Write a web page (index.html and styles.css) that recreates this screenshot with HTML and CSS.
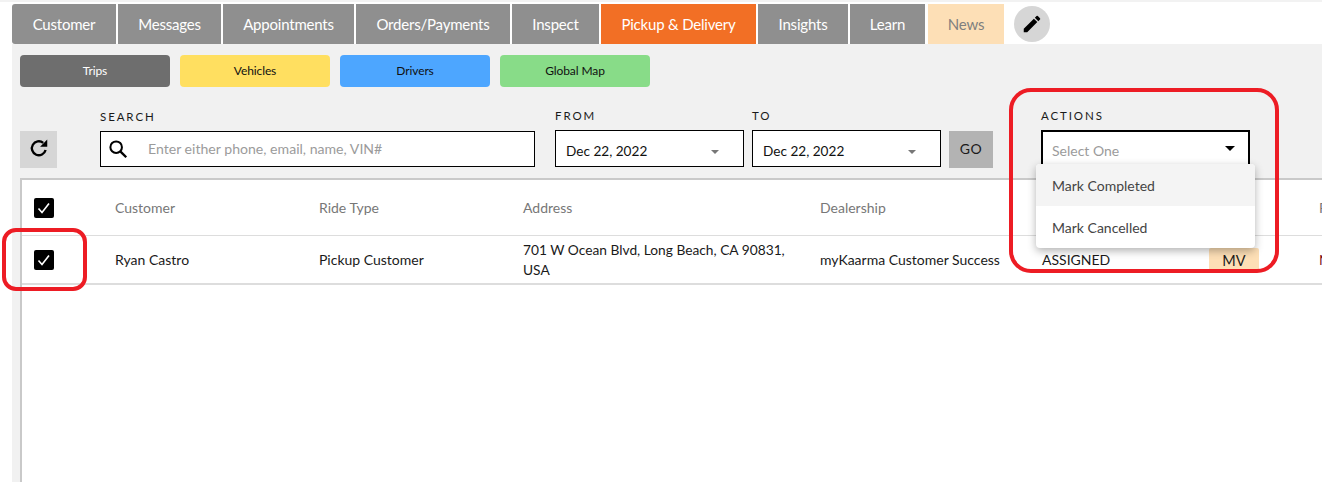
FILE: index.html
```html
<!DOCTYPE html>
<html lang="en">
<head>
<meta charset="utf-8">
<title>Pickup &amp; Delivery</title>
<link rel="stylesheet" href="styles.css">
</head>
<body>
<div class="page">
  <nav class="tabs">
    <a class="tab w-customer first">Customer</a>
    <a class="tab w-messages">Messages</a>
    <a class="tab w-appts">Appointments</a>
    <a class="tab w-orders">Orders/Payments</a>
    <a class="tab w-inspect">Inspect</a>
    <a class="tab w-pickup active">Pickup &amp; Delivery</a>
    <a class="tab w-insights">Insights</a>
    <a class="tab w-learn">Learn</a>
    <a class="tab w-news news">News</a>
    <span class="edit">
      <svg width="22" height="22" viewBox="0 0 24 24"><path d="M3 17.25V21h3.75L17.81 9.94l-3.75-3.75L3 17.25zM20.71 7.04a1 1 0 0 0 0-1.41l-2.34-2.34a1 1 0 0 0-1.41 0l-1.83 1.83 3.75 3.75 1.83-1.83z" fill="#000"/></svg>
    </span>
  </nav>
  <main class="panel">
    <div class="subnav">
      <a class="pill trips">Trips</a>
      <a class="pill vehicles">Vehicles</a>
      <a class="pill drivers">Drivers</a>
      <a class="pill map">Global Map</a>
    </div>
    <div class="filters">
      <button class="refresh">
        <svg width="22" height="22" viewBox="0 0 24 24"><path d="M19.2 14.2A7.6 7.6 0 1 1 16.6 6.4" fill="none" stroke="#000" stroke-width="2.6"/><path d="M13.2 10.6H21V2.8z" fill="#000"/></svg>
      </button>
      <div class="field search-field">
        <label class="label">SEARCH</label>
        <div class="box search">
          <svg width="22" height="22" viewBox="0 0 24 24"><circle cx="10" cy="10" r="6.3" fill="none" stroke="#000" stroke-width="2.2"/><path d="M14.8 14.8 21 21" stroke="#000" stroke-width="2.6" fill="none"/></svg>
          <span class="placeholder">Enter either phone, email, name, VIN#</span>
        </div>
      </div>
      <div class="field date-from">
        <label class="label">FROM</label>
        <div class="box date"><span>Dec 22, 2022</span><i class="caret grey"></i></div>
      </div>
      <div class="field date-to">
        <label class="label">TO</label>
        <div class="box date"><span>Dec 22, 2022</span><i class="caret grey"></i></div>
      </div>
      <button class="go">GO</button>
      <div class="field actions">
        <label class="label">ACTIONS</label>
        <div class="box select"><span class="placeholder">Select One</span><i class="caret"></i></div>
        <ul class="menu">
          <li class="hover">Mark Completed</li>
          <li>Mark Cancelled</li>
        </ul>
      </div>
    </div>
    <section class="table">
      <div class="row head">
        <span class="cb"><svg width="20" height="20" viewBox="0 0 20 20"><path d="M4.5 10.5 8 14.5 15 5.5" fill="none" stroke="#fff" stroke-width="1.6"/></svg></span>
        <span>Customer</span>
        <span>Ride Type</span>
        <span>Address</span>
        <span>Dealership</span>
        <span></span>
        <span></span>
        <span>Pickup</span>
      </div>
      <div class="row body">
        <span class="cb"><svg width="20" height="20" viewBox="0 0 20 20"><path d="M4.5 10.5 8 14.5 15 5.5" fill="none" stroke="#fff" stroke-width="1.6"/></svg></span>
        <span>Ryan Castro</span>
        <span>Pickup Customer</span>
        <span class="address">701 W Ocean Blvd, Long Beach, CA 90831, USA</span>
        <span>myKaarma Customer Success</span>
        <span class="status">ASSIGNED</span>
        <span class="badge">MV</span>
        <span class="extra">N/A</span>
      </div>
    </section>
  </main>
  <div class="mark mark-actions"></div>
  <div class="mark mark-check"></div>
</div>
</body>
</html>
```
FILE: styles.css
```css
* { box-sizing: border-box; }
html, body { margin: 0; padding: 0; height: 100%; overflow: hidden; background: #fff; }
body { font-family: Lato, "Liberation Sans", sans-serif; color: #1a1a1a; }
.page { position: relative; width: 1322px; height: 482px; overflow: hidden; padding: 2px 0 0 12px; border-top: 2px solid #f2f2f2; }

.tabs { display: flex; align-items: center; height: 40px; gap: 2px; }
.tab { display: flex; align-items: center; justify-content: center; height: 40px; padding-bottom: 1px; background: #8f8f8f; color: #fff; font-size: 15px; letter-spacing: -0.2px; }
.first { border-top-left-radius: 3px; border-bottom-left-radius: 3px; }
.w-customer { width: 104px; }
.w-messages { width: 103px; }
.w-appts { width: 131px; }
.w-orders { width: 154px; }
.w-inspect { width: 87px; }
.w-pickup { width: 155px; }
.w-insights { width: 90px; }
.w-learn { width: 75px; margin-right: 1px; }
.w-news { width: 76px; }
.active { background: #f26f25; }
.news { background: #fddfb6; color: #7f7f7f; }
.edit { display: flex; align-items: center; justify-content: center; width: 36px; height: 36px; margin-left: 8px; border-radius: 50%; background: #d6d6d6; }

.panel { height: 438px; background: #f1f1f1; padding: 11px 0 0 8px; }
.subnav { display: flex; gap: 10px; }
.pill { display: flex; align-items: center; justify-content: center; width: 150px; height: 32px; padding-bottom: 1px; border-radius: 4px; font-size: 12px; color: #111; letter-spacing: -0.1px; }
.trips { background: #6e6e6e; color: #fff; }
.vehicles { background: #ffdf60; }
.drivers { background: #4da6ff; }
.map { background: #88dc88; }

.filters { position: relative; display: flex; align-items: flex-end; height: 81px; }
.refresh { display: flex; align-items: center; justify-content: center; width: 37px; height: 37px; margin: 0 43px 0 0; padding: 0 0 3px; border: 0; background: #d6d6d6; }
.field { display: flex; flex-direction: column; }
.label { font-size: 11.5px; line-height: 14px; letter-spacing: 1.9px; color: #1a1a1a; margin-bottom: 7px; }
.box { display: flex; align-items: center; background: #fff; border: 1px solid #000; font-size: 14px; }
.search-field { width: 435px; margin-right: 20px; }
.search-field .label { margin-bottom: 7px; }
.search { height: 36px; padding-left: 6px; margin-bottom: 1px; padding-bottom: 1px; font-size: 14.1px; }
.search svg { flex: none; margin-right: 19px; }
.placeholder { color: #9b9b9b; }
.date-from { width: 189px; margin-right: 8px; margin-bottom: 1px; }
.date-to { width: 189px; margin-right: 8px; margin-bottom: 1px; }
.date { justify-content: space-between; height: 37px; padding: 4px 24px 0 10px; color: #111; font-size: 13.6px; }
.caret { width: 0; height: 0; border-left: 5px solid transparent; border-right: 5px solid transparent; border-top: 5px solid #000; }
.caret.grey { border-left-width: 4px; border-right-width: 4px; border-top: 4px solid #777; margin-top: 2px; }
.go { width: 44px; height: 37px; margin: 0 48px 0 0; padding: 0 0 2px; border: 0; background: #b3b3b3; color: #1a1a1a; font: 14px Lato, sans-serif; letter-spacing: 0.5px; }
.actions { position: relative; width: 209px; margin-bottom: 1px; }
.select { justify-content: space-between; height: 37px; padding: 4px 13px 0 9px; border-width: 2px; }
.select .caret { margin-top: -4px; }
.menu { position: absolute; left: -5px; top: 55px; width: 219px; margin: 0; padding: 0; list-style: none; background: #fff; border-radius: 4px; box-shadow: 0 3px 8px rgba(0,0,0,.3); font-size: 14px; color: #444; overflow: hidden; z-index: 2; }
.menu li { display: flex; align-items: center; height: 42px; padding-left: 16px; }
.menu li.hover { background: #f4f4f4; }

.table { margin-top: 10px; width: 1400px; height: 320px; background: #fff; border: solid #c9c9c9; border-width: 2px 0 0 2px; font-size: 14px; }
.row { display: grid; grid-template-columns: 93px 204px 204px 297px 222px 167px 110px 1fr; align-items: center; }
.head { height: 56px; border-bottom: 1px solid #ddd; color: #777; }
.body { height: 49px; border-bottom: 2px solid #ddd; color: #1a1a1a; }
.cb { display: block; width: 20px; height: 20px; margin-left: 12px; background: #000; border-radius: 2px; }
.cb svg { display: block; }
.address { padding-right: 12px; line-height: 20px; font-size: 13.75px; }
.badge { display: flex; align-items: center; justify-content: center; justify-self: start; width: 50px; height: 24px; margin-top: 1px; background: #fddfb6; border-radius: 2px; color: #1a1a1a; font-size: 14.5px; }
.extra { color: #7a1020; }

.mark { position: absolute; border: 4px solid #ed1c24; z-index: 5; }
.mark-actions { left: 1009px; top: 86px; width: 270px; height: 185px; border-radius: 22px; }
.mark-check { left: 2px; top: 226px; width: 85px; height: 63px; border-radius: 14px; }
```
